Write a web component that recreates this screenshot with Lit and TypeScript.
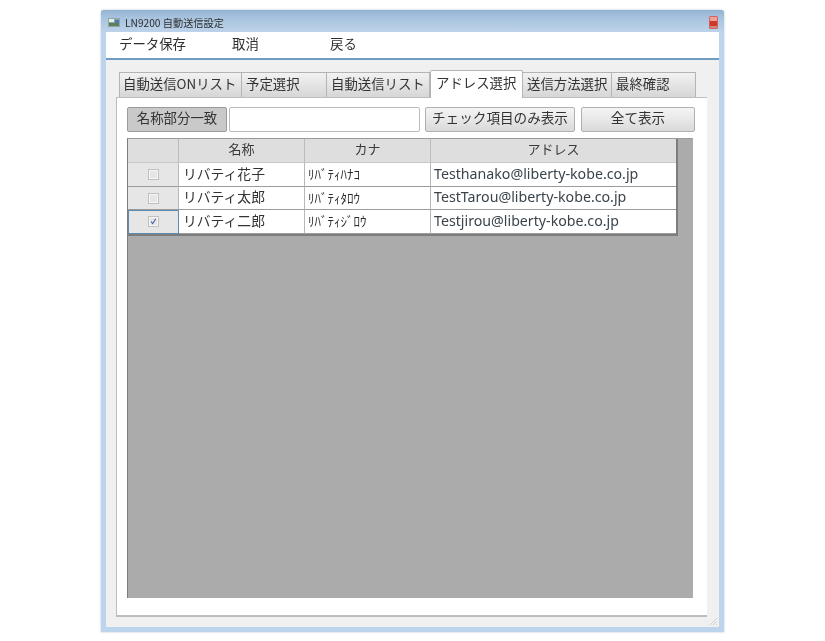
import { LitElement, html, svg, css } from "lit";
import { customElement } from "lit/decorators.js";

const rows = [
  { name: "リバティ花子", kana: "ﾘﾊﾞﾃｨﾊﾅｺ", mail: "Testhanako@liberty-kobe.co.jp", on: false, h: 24 },
  { name: "リバティ太郎", kana: "ﾘﾊﾞﾃｨﾀﾛｳ", mail: "TestTarou@liberty-kobe.co.jp", on: false, h: 23 },
  { name: "リバティ二郎", kana: "ﾘﾊﾞﾃｨｼﾞﾛｳ", mail: "Testjirou@liberty-kobe.co.jp", on: true, h: 24 },
];
const tabs = [
  { t: "自動送信ONリスト", w: 123 },
  { t: "予定選択", w: 85 },
  { t: "自動送信リスト", w: 103 },
  { t: "アドレス選択", w: 93, active: true },
  { t: "送信方法選択", w: 89 },
  { t: "最終確認", w: 84 },
];

@customElement("app-root")
export class AppRoot extends LitElement {
  static styles = css`
    :host {
      display: block;
      width: 825px;
      height: 641px;
      background: #fff;
      overflow: hidden;
      font-family: "Noto Sans CJK JP", "Noto Sans", sans-serif;
      color: #333;
    }
    .stage { padding: 10px 0 0 101px; filter: blur(0.45px); }
    .window {
      width: 623px;
      height: 622px;
      box-sizing: border-box;
      display: flex;
      flex-direction: column;
      background: #bcd4ec;
      border-radius: 3px 3px 0 0;
      padding: 0 5px 5px;
      box-shadow: 0 0 2px rgba(90, 120, 150, 0.5);
    }
    .title {
      height: 22px;
      flex: none;
      margin: 0 -5px;
      padding: 0 6px 0 7px;
      display: flex;
      align-items: center;
      gap: 5px;
      font-size: 10.2px;
      color: #2e2e2e;
      background-image: linear-gradient(180deg, #93b3d2 0%, #a8c3de 35%, #bcd3ea 100%);
      border-radius: 3px 3px 0 0;
    }
    .title span { padding-top: 3px; }
    .close { margin-left: auto; margin-top: 2px; display: block; }
    .icon { margin-top: 3px; display: block; }
    .client { flex: 1; display: flex; flex-direction: column; background: #f0f0f0; min-height: 0; position: relative; }
    .menu {
      height: 28px;
      flex: none;
      background: #fff;
      border-bottom: 2px solid #6f9cc0;
      display: flex;
      align-items: center;
      font-size: 13.4px;
      box-sizing: border-box;
      padding-bottom: 5px;
    }
    .menu span { color: #2e2e2e; }
    .m1 { margin-left: 13px; width: 113px; }
    .m2 { width: 98px; }
    .tabs {
      display: flex;
      align-items: flex-end;
      height: 37px;
      flex: none;
      box-sizing: border-box;
      padding-left: 13px;
      position: relative;
      z-index: 1;
    }
    .tab {
      height: 25px;
      box-sizing: border-box;
      border: 1px solid #b4b4b4;
      border-bottom: none;
      border-left-width: 0;
      background: linear-gradient(180deg, #f2f2f2, #e4e4e4 50%, #d6d6d6);
      font-size: 13.4px;
      padding: 0 0 4px 4px;
      display: flex;
      align-items: center;
      white-space: nowrap;
      overflow: hidden;
      color: #333;
    }
    .tab:first-child { border-left-width: 1px; padding-left: 3px; }
    .tab.active {
      height: 28px;
      background: #fff;
      font-size: 13.4px;
      margin-bottom: -1px;
      padding-left: 5px;
      border-left-width: 1px;
      border-radius: 2px 2px 0 0;
      padding-bottom: 6px;
    }
    .panel {
      margin: 0 12px 0 10px;
      height: 520px;
      flex: none;
      box-sizing: border-box;
      background: #fff;
      border: 1.5px solid #bdbdbd;
      border-right: none;
      border-bottom-width: 2px;
      padding: 9px 11px 0 10px;
      display: flex;
      flex-direction: column;
    }
    .search { display: flex; height: 25px; flex: none; font-size: 13.6px; }
    .btn {
      box-sizing: border-box;
      border: 1px solid #b0b0b0;
      border-radius: 2px;
      background: linear-gradient(180deg, #f4f4f4, #e8e8e8 50%, #d9d9d9);
      display: flex;
      align-items: center;
      justify-content: center;
      color: #333;
      white-space: nowrap;
      padding-bottom: 5px;
    }
    .b-match { width: 100px; background: #c9c9c9; border-color: #9a9a9a; font-size: 13.4px; }
    .field {
      width: 191px;
      margin-left: 2px;
      box-sizing: border-box;
      border: 1px solid #bcbcbc;
      border-radius: 2px;
      background: #fff;
    }
    .b-check { width: 150px; margin-left: 5px; }
    .b-all { width: 114px; margin-left: 6px; }
    .grid {
      margin-top: 6px;
      margin-right: 3px;
      height: 460px;
      flex: none;
      box-sizing: border-box;
      background: #ababab;
      border-left: 1.5px solid #7c7c7c;
      border-top: 1.5px solid #9a9a9a;
      display: flex;
      flex-direction: column;
      align-items: flex-start;
    }
    .table {
      width: 548px;
      display: grid;
      grid-template-columns: 51px 126px 126px 245px;
      border-right: 2px solid #7d7d7d;
      border-bottom: 2px solid #7d7d7d;
      background: #fff;
    }
    .h {
      height: 24px;
      box-sizing: border-box;
      background: #dedede;
      border-right: 1px solid #bdbdbd;
      border-bottom: 1px solid #c8c8c8;
      display: flex;
      align-items: center;
      justify-content: center;
      font-size: 13px;
      color: #3a3a3a;
      padding-bottom: 5px;
    }
    .h:nth-child(4) { border-right: none; }
    .c {
      box-sizing: border-box;
      border-right: 1px solid #b8b8b8;
      border-bottom: 1px solid #9c9c9c;
      display: flex;
      align-items: center;
      padding: 0 0 4px 4px;
      white-space: nowrap;
      overflow: hidden;
      color: #333;
    }
    .c.last { border-right: none; font-family: "Noto Sans", sans-serif; font-size: 14.2px; padding: 0 0 3px 3px; color: #3a444c; }
    .c.kana { font-size: 13px; padding: 0 0 2px 3px; color: #2c2c2c; }
    .c.name { font-size: 13.8px; }
    .c.chk { background: #e6e6e6; justify-content: center; padding: 0; }
    .c.chk.sel { outline: 1.5px solid #5d8cb0; outline-offset: -1.5px; }
    .grip { position: absolute; right: 1px; bottom: 1px; display: block; }
    .box { display: block; }
  `;

  private box(on: boolean) {
    return html`<svg class="box" width="11" height="11" viewBox="0 0 11 11">
      <rect x="0.5" y="0.5" width="10" height="10" fill="#f7f7f7" stroke="#c0c0c0" />
      <rect x="2" y="2" width="7" height="7" fill="#e6e6e6" />
      ${on
        ? svg`<path d="M3 5.5 L4.7 7.6 L7.8 2.8" fill="none" stroke="#4a5fa8" stroke-width="1.1" />`
        : ""}
    </svg>`;
  }

  render() {
    return html`<div class="stage">
      <div class="window">
        <div class="title">
          <svg class="icon" width="12" height="9" viewBox="0 0 12 9">
            <rect width="12" height="9" fill="#8fa6a8" />
            <rect x="1" y="1" width="5" height="3" fill="#e8f0e0" />
            <rect x="1" y="5" width="10" height="3" fill="#5c7f5a" />
            <rect x="7" y="2" width="4" height="3" fill="#4a78b8" />
          </svg>
          <span>LN9200 自動送信設定</span>
          <svg class="close" width="9" height="13" viewBox="0 0 9 13">
            <rect width="9" height="13" rx="1.5" fill="#d8605a" />
            <rect x="1" y="1" width="7" height="4" fill="#e9a39c" />
            <rect x="1" y="5" width="7" height="5" fill="#d0352c" />
            <rect x="1" y="10" width="7" height="2" fill="#c98a80" />
          </svg>
        </div>
        <div class="client">
          <div class="menu">
            <span class="m1">データ保存</span><span class="m2">取消</span><span>戻る</span>
          </div>
          <div class="tabs">
            ${tabs.map(
              (t) => html`<div class="tab ${t.active ? "active" : ""}" style="width:${t.w}px">${t.t}</div>`
            )}
          </div>
          <div class="panel">
            <div class="search">
              <div class="btn b-match">名称部分一致</div>
              <div class="field"></div>
              <div class="btn b-check">チェック項目のみ表示</div>
              <div class="btn b-all">全て表示</div>
            </div>
            <div class="grid">
              <div class="table">
                <div class="h"></div><div class="h">名称</div><div class="h">カナ</div><div class="h">アドレス</div>
                ${rows.map(
                  (r) => html`
                    <div class="c chk ${r.on ? "sel" : ""}" style="height:${r.h}px">${this.box(r.on)}</div>
                    <div class="c name" style="height:${r.h}px">${r.name}</div>
                    <div class="c kana" style="height:${r.h}px">${r.kana}</div>
                    <div class="c last" style="height:${r.h}px">${r.mail}</div>
                  `
                )}
              </div>
            </div>
          </div>
          <svg class="grip" width="10" height="10" viewBox="0 0 10 10">
            <path d="M9 2 L2 9 M9 5 L5 9 M9 8 L8 9" stroke="#cfcfcf" stroke-width="1" fill="none" />
          </svg>
        </div>
      </div>
    </div>`;
  }
}
